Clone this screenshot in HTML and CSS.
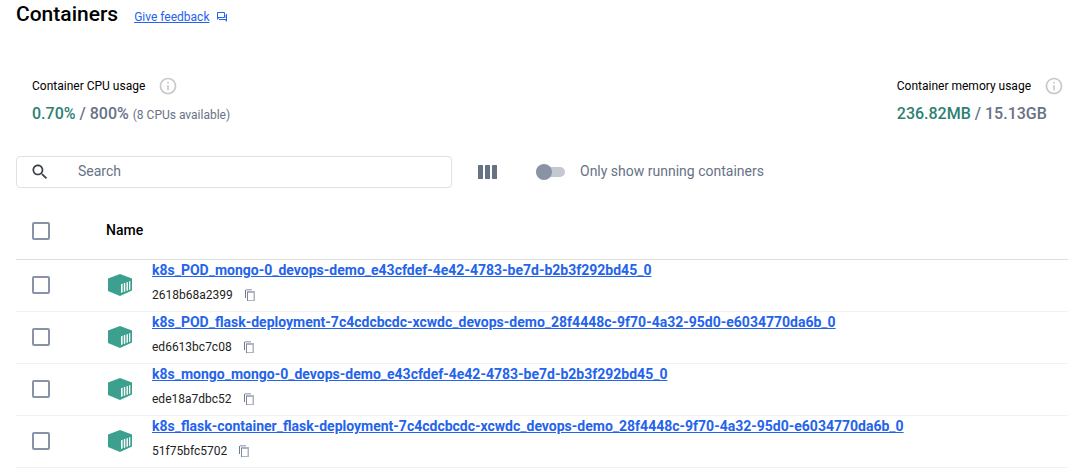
FILE: index.html
```html
<!DOCTYPE html>
<html lang="en">
<head>
<meta charset="utf-8">
<title>Containers</title>
<link rel="stylesheet" href="styles.css">
</head>
<body>
<svg class="sprite" aria-hidden="true">
  <symbol id="info" viewBox="0 0 24 24"><path d="M11 7h2v2h-2zm0 4h2v6h-2zm1-9C6.480 2 2 6.480 2 12s4.480 10 10 10 10-4.480 10-10S17.520 2 12 2zm0 18c-4.410 0-8-3.590-8-8s3.590-8 8-8 8 3.590 8 8-3.590 8-8 8z"/></symbol>
  <symbol id="copy" viewBox="0 0 10 12"><path fill="#6c7a90" d="M0 1h1v8H0z"/><path fill="#adb3c2" d="M1 0h6v1.500H1z"/><path fill="#adb3c2" fill-rule="evenodd" d="M2 2h8v10H2zM3 4v7h5.500V4z"/><path fill="#7d889c" d="M2 3h1v9H2z"/></symbol>
  <symbol id="box" viewBox="0 0 24 22"><path fill="#3ba08d" d="M12 0l12 4.500v12L12 22 0 17V4.500z"/><path fill="#fff" d="M13 10.200l1.600-.5v8.600l-1.600.7zM15.800 9.300l1.500-.5v8.600l-1.500.6zM18.500 8.400l1.400-.5v8.500l-1.400.6zM21 7.600l1.300-.5v8.400l-1.300.6z"/></symbol>
</svg>
<main class="page">
  <header class="heading">
    <h1 class="title">Containers</h1>
    <a class="feedback" href="#"><span class="feedback-text">Give feedback</span>
      <svg class="feedback-icon" viewBox="0 0 10 10" aria-hidden="true"><path fill="#9dbcf5" d="M2 6h7V3H8v3z"/><path fill="none" stroke="#2463eb" d="M.5 7V.5h7v5h-6"/><path fill="#2463eb" d="M0 5h2v1L0 8zM9 2h1v8L8 8H2V7h7z"/></svg>
    </a>
  </header>
  <section class="stats">
    <div class="stat">
      <div class="stat-label">Container CPU usage <svg class="info"><use href="#info"/></svg></div>
      <div class="stat-value"><span class="used">0.70%</span> / 800% <small class="note">(8 CPUs available)</small></div>
    </div>
    <div class="stat">
      <div class="stat-label">Container memory usage <svg class="info"><use href="#info"/></svg></div>
      <div class="stat-value"><span class="used">236.82MB</span> / 15.13GB</div>
    </div>
  </section>
  <div class="toolbar">
    <label class="search">
      <svg class="search-icon" viewBox="0 0 24 24" aria-hidden="true"><path d="M15.500 14h-.79l-.28-.27C15.410 12.590 16 11.110 16 9.500 16 5.910 13.090 3 9.500 3S3 5.910 3 9.500 5.910 16 9.500 16c1.610 0 3.090-.59 4.230-1.570l.27.28v.79l5 4.990L20.490 19l-4.990-5zm-6 0C7.010 14 5 11.990 5 9.500S7.010 5 9.500 5 14 7.010 14 9.500 11.990 14 9.500 14z"/></svg>
      <input class="search-input" type="search" placeholder="Search" aria-label="Search">
    </label>
    <button class="columns" type="button" aria-label="Columns"><svg class="columns-icon" viewBox="0 0 19 14"><rect width="5" height="14" rx=".5"/><rect x="7" width="5" height="14" rx=".5"/><rect x="14" width="5" height="14" rx=".5"/></svg></button>
    <label class="toggle"><input class="switch" type="checkbox" role="switch"><span class="toggle-text">Only show running containers</span></label>
  </div>
  <table class="list">
    <thead>
      <tr><th class="pick"><input class="check" type="checkbox" aria-label="Select all"></th><th class="name-head" colspan="2">Name</th></tr>
    </thead>
    <tbody>
      <tr>
        <td class="pick"><input class="check" type="checkbox" aria-label="Select 2618b68a2399"></td>
        <td class="kind"><svg class="box"><use href="#box"/></svg></td>
        <td class="details"><a class="name" href="#">k8s_POD_mongo-0_devops-demo_e43cfdef-4e42-4783-be7d-b2b3f292bd45_0</a>
          <div class="id">2618b68a2399<button class="copy" type="button" aria-label="Copy"><svg class="copy-icon"><use href="#copy"/></svg></button></div></td>
      </tr>
      <tr>
        <td class="pick"><input class="check" type="checkbox" aria-label="Select ed6613bc7c08"></td>
        <td class="kind"><svg class="box"><use href="#box"/></svg></td>
        <td class="details"><a class="name" href="#">k8s_POD_flask-deployment-7c4cdcbcdc-xcwdc_devops-demo_28f4448c-9f70-4a32-95d0-e6034770da6b_0</a>
          <div class="id">ed6613bc7c08<button class="copy" type="button" aria-label="Copy"><svg class="copy-icon"><use href="#copy"/></svg></button></div></td>
      </tr>
      <tr>
        <td class="pick"><input class="check" type="checkbox" aria-label="Select ede18a7dbc52"></td>
        <td class="kind"><svg class="box"><use href="#box"/></svg></td>
        <td class="details"><a class="name" href="#">k8s_mongo_mongo-0_devops-demo_e43cfdef-4e42-4783-be7d-b2b3f292bd45_0</a>
          <div class="id">ede18a7dbc52<button class="copy" type="button" aria-label="Copy"><svg class="copy-icon"><use href="#copy"/></svg></button></div></td>
      </tr>
      <tr>
        <td class="pick"><input class="check" type="checkbox" aria-label="Select 51f75bfc5702"></td>
        <td class="kind"><svg class="box"><use href="#box"/></svg></td>
        <td class="details"><a class="name" href="#">k8s_flask-container_flask-deployment-7c4cdcbcdc-xcwdc_devops-demo_28f4448c-9f70-4a32-95d0-e6034770da6b_0</a>
          <div class="id">51f75bfc5702<button class="copy" type="button" aria-label="Copy"><svg class="copy-icon"><use href="#copy"/></svg></button></div></td>
      </tr>
    </tbody>
  </table>
</main>
</body>
</html>
```
FILE: styles.css
```css
* { box-sizing: border-box; }
body { margin: 0; background: #fff; color: #000; font: 14px/20px Roboto, sans-serif; }
.sprite { display: none; }
svg { display: block; flex: none; }
.page { padding-left: 16px; }
button { border: 0; padding: 0; background: none; }

.heading { display: flex; align-items: center; gap: 16px; height: 28px; }
.title { margin: 0; font-size: 21px; font-weight: 500; line-height: 28px; }
.feedback { display: flex; align-items: center; gap: 8px; padding-top: 6px; color: #2463eb; font-size: 12px; line-height: 16px; text-decoration: none; }
.feedback-text { text-decoration: underline; }
.feedback-icon { width: 10px; height: 10px; }

.stats { display: flex; justify-content: space-between; padding: 48px 4px 0 16px; }
.stat-label { display: flex; align-items: center; gap: 13px; font-size: 12px; line-height: 20px; }
.info { width: 20px; height: 20px; fill: #c8c8c8; }
.stat-value { margin-top: 6px; color: #677285; font-size: 16px; font-weight: 500; line-height: 24px; }
.used { color: #2e7f74; }
.note { font-size: 12px; font-weight: 400; }

.toolbar { display: flex; align-items: center; padding-top: 29px; }
.search { display: flex; align-items: center; width: 436px; height: 32px; padding-left: 13px; gap: 28px; border: 1px solid #dfe1e6; border-radius: 4px; }
.search-icon { width: 20px; height: 20px; fill: #393f49; }
.search-input { flex: 1; min-width: 0; border: 0; padding: 0 0 2px; outline: 0; background: none; font: inherit; }
.search-input::placeholder { color: #677285; opacity: 1; }
.columns { margin-left: 26px; }
.columns-icon { width: 19px; height: 14px; fill: #677285; }
.toggle { display: flex; align-items: center; gap: 15px; margin-left: 39px; color: #677285; }
.toggle-text { padding-bottom: 2px; }
.switch { appearance: none; display: flex; align-items: center; width: 29px; height: 10px; margin: 0; background: #c4c8d1; border-radius: 5px; }
.switch::before { content: ""; width: 16px; height: 16px; border-radius: 50%; background: #8993a5; }

.list { width: 100%; margin-top: 14px; border-collapse: separate; border-spacing: 0; }
.list th, .list td { padding: 0; text-align: left; }
.list th { height: 58px; border-bottom: 1px solid #dddee0; font-weight: 500; }
.list .name-head { padding-bottom: 2px; }
.list td { height: 52px; padding-bottom: 2px; border-bottom: 1px solid #f2f2f4; }
.list .pick { width: 90px; padding-left: 16px; }
.list .kind { width: 46px; padding-left: 2px; }
.list .details { vertical-align: top; }
.check { appearance: none; display: block; width: 18px; height: 18px; margin: 0; border: 2px solid #8993a8; border-radius: 2px; }
.box { width: 24px; height: 22px; }
.name { display: block; color: #2463eb; font-weight: 700; line-height: 20px; }
.id { display: flex; align-items: center; gap: 12px; padding-top: 5px; font-size: 12px; line-height: 20px; color: #222; }
.copy-icon { width: 10px; height: 12px; }
```
